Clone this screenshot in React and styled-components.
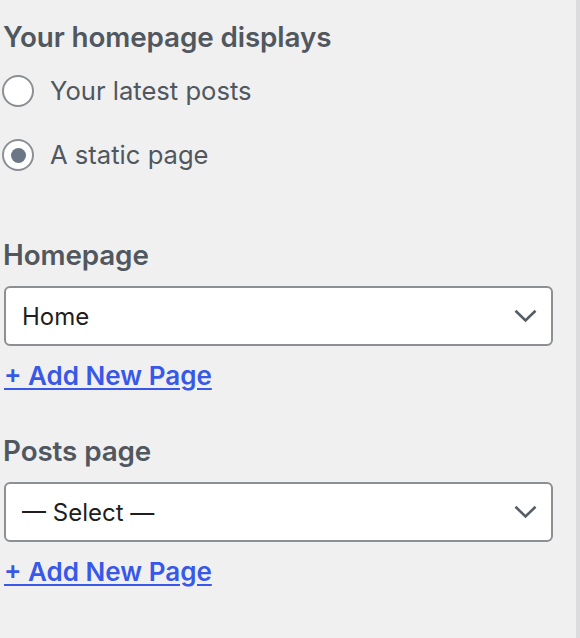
import React, { useState } from 'react';
import styled, { createGlobalStyle } from 'styled-components';

const GlobalStyle = createGlobalStyle`
  html, body {
    margin: 0;
    padding: 0;
    background: #f0f0f0;
  }
  body {
    font-family: Inter, "Noto Sans", sans-serif;
    -webkit-font-smoothing: antialiased;
  }
`;

const Panel = styled.div`
  display: flex;
  min-height: 638px;
`;

const Content = styled.div`
  flex: 1;
  padding: 20px 23px 0 3px;
`;

const Divider = styled.div`
  width: 4px;
  background: #dcdcde;
`;

const Heading = styled.h2`
  margin: 0;
  font-size: 27.8px;
  font-weight: 600;
  line-height: 34px;
  letter-spacing: -0.1px;
  color: #50575e;
`;

const RadioList = styled.div`
  display: flex;
  flex-direction: column;
  gap: 28px;
  margin-top: 19px;
`;

const RadioRow = styled.label`
  display: flex;
  align-items: center;
  gap: 16px;
  font-size: 25.6px;
  line-height: 36px;
  color: #50575e;
  cursor: pointer;
`;

const RadioCircle = styled.span`
  box-sizing: border-box;
  width: 32px;
  height: 32px;
  margin-left: -1px;
  border-radius: 50%;
  border: 2px solid #8c8f94;
  background: #fff;
  display: flex;
  align-items: center;
  justify-content: center;

  &::after {
    content: '';
    width: 15px;
    height: 15px;
    border-radius: 50%;
    background: ${({ $checked }) => ($checked ? '#6b7785' : 'transparent')};
  }
`;

const Field = styled.div`
  margin-top: ${({ $top }) => $top}px;
`;

const SelectBox = styled.div`
  box-sizing: border-box;
  margin-top: 14px;
  margin-left: 1px;
  height: 60px;
  display: flex;
  align-items: center;
  justify-content: space-between;
  padding: 0 14px 0 16px;
  background: #fff;
  border: 2px solid #8c8f94;
  border-radius: 6px;
  font-size: 24px;
  color: #1e1e1e;
`;

const AddLink = styled.a`
  display: inline-block;
  margin-top: 15px;
  margin-left: 1px;
  font-size: 26px;
  font-weight: 600;
  line-height: 30px;
  color: #3858e9;
  text-decoration: underline;
  text-underline-offset: 3px;
  text-decoration-thickness: 2px;
`;

const Chevron = () => (
  <svg width="23" height="14" viewBox="0 0 23 14" fill="none">
    <path d="M1.5 1.8 L11.5 11.5 L21.5 1.8" stroke="#555d66" strokeWidth="2.6" />
  </svg>
);

const PageSelect = ({ label, value, top }) => (
  <Field $top={top}>
    <Heading>{label}</Heading>
    <SelectBox>
      <span>{value}</span>
      <Chevron />
    </SelectBox>
    <AddLink href="#">+ Add New Page</AddLink>
  </Field>
);

export default function App() {
  const [choice, setChoice] = useState('static');

  return (
    <>
      <GlobalStyle />
      <Panel>
        <Content>
          <Heading>Your homepage displays</Heading>
          <RadioList>
            <RadioRow onClick={() => setChoice('posts')}>
              <RadioCircle $checked={choice === 'posts'} />
              Your latest posts
            </RadioRow>
            <RadioRow onClick={() => setChoice('static')}>
              <RadioCircle $checked={choice === 'static'} />
              A static page
            </RadioRow>
          </RadioList>
          <PageSelect label="Homepage" value="Home" top={65} />
          <PageSelect label="Posts page" value="— Select —" top={43} />
        </Content>
        <Divider />
      </Panel>
    </>
  );
}
